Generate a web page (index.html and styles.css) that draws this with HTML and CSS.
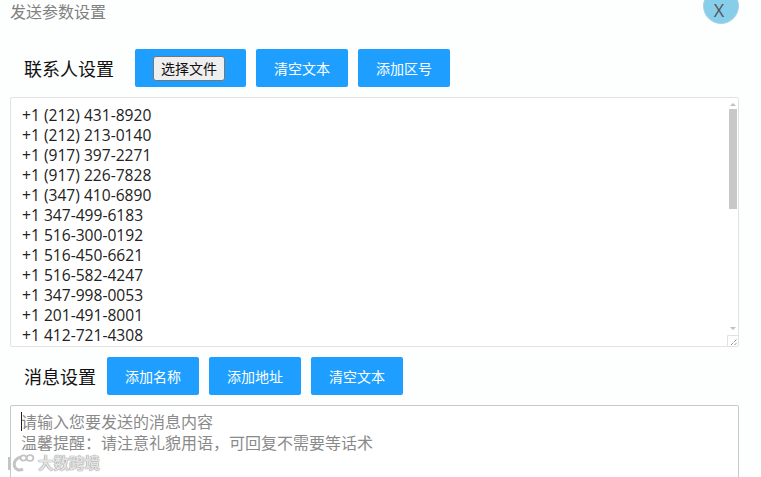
FILE: index.html
```html
<!DOCTYPE html>
<html lang="zh">
<head>
<meta charset="utf-8">
<title>发送参数设置</title>
<link rel="stylesheet" href="styles.css">
</head>
<body>
<div class="dialog">
  <header class="head">
    <h1 class="title">发送参数设置</h1>
    <button class="close" type="button">X</button>
  </header>
  <section class="row row-contacts">
    <span class="label label-contacts">联系人设置</span>
    <span class="btn btn-file"><span class="file-face">选择文件</span></span>
    <button class="btn" type="button">清空文本</button>
    <button class="btn" type="button">添加区号</button>
  </section>
  <div class="contacts-wrap">
    <textarea class="box box-contacts" spellcheck="false">+1 (212) 431-8920
+1 (212) 213-0140
+1 (917) 397-2271
+1 (917) 226-7828
+1 (347) 410-6890
+1 347-499-6183
+1 516-300-0192
+1 516-450-6621
+1 516-582-4247
+1 347-998-0053
+1 201-491-8001
+1 412-721-4308</textarea>
    <span class="arrow-up"></span>
    <span class="thumb"></span>
    <span class="arrow-down"></span>
    <svg class="grip" width="12" height="12" viewBox="0 0 12 12" fill="none">
      <path d="M.5 12V.5H12" stroke="#e2e2e2"/>
      <path d="M4 10 10 4M7.5 10 10 7.500" stroke="#555" stroke-dasharray="1 1"/>
    </svg>
  </div>
  <section class="row row-message">
    <span class="label label-message">消息设置</span>
    <button class="btn" type="button">添加名称</button>
    <button class="btn" type="button">添加地址</button>
    <button class="btn" type="button">清空文本</button>
  </section>
  <div class="message-wrap">
    <textarea class="box box-message" placeholder="请输入您要发送的消息内容&#10;温馨提醒：请注意礼貌用语，可回复不需要等话术"></textarea>
    <span class="caret"></span>
  </div>
</div>
<div class="watermark">
  <svg class="wm-icon" width="30" height="20" viewBox="0 0 30 20" fill="none">
    <path d="M2.500 5v13" stroke="#c4c4c4" stroke-width="3"/>
    <path d="M14 5c-5 1-7.500 5-6.500 9s5 5 8.500 3" stroke="#c4c4c4" stroke-width="3"/>
    <ellipse cx="16.500" cy="6" rx="3" ry="2.600" stroke="#c4c4c4" stroke-width="1.800"/>
    <ellipse cx="23" cy="6" rx="3.400" ry="2.800" stroke="#c4c4c4" stroke-width="1.800"/>
  </svg>
  <span class="wm-text">大数跨境</span>
</div>
</body>
</html>
```
FILE: styles.css
```css
* { box-sizing: border-box; }
html, body { margin: 0; height: 100%; overflow: hidden; }
body {
  width: 761px;
  height: 477px;
  position: relative;
  background: #fdfefe;
  font-family: "Open Sans", "Noto Sans CJK SC", sans-serif;
}
.dialog {
  height: 477px;
  overflow: hidden;
  padding: 0 22px 0 10px;
  display: flex;
  flex-direction: column;
}
.head { height: 49px; flex: none; display: flex; justify-content: space-between; align-items: flex-start; }
.title {
  margin: 1px 0 0;
  font-size: 16px;
  font-weight: 400;
  line-height: 20px;
  color: #808080;
  font-family: "Noto Sans CJK SC", sans-serif;
}
.close {
  width: 36px;
  height: 36px;
  margin-top: -12px;
  padding: 8px 4px 0 0;
  border: 1px solid #a9d3e6;
  border-radius: 50%;
  background: #87ceeb;
  color: #555;
  font: 400 18px/20px "Open Sans", sans-serif;
}
.row { display: flex; flex: none; align-items: center; gap: 10px; height: 38px; }
.row-contacts { padding-left: 14px; margin-bottom: 10px; }
.row-message { padding-left: 14px; margin-top: 10px; margin-bottom: 10px; }
.label {
  font-size: 18px;
  line-height: 24px;
  color: #111;
  font-family: "Noto Sans CJK SC", sans-serif;
}
.label-contacts { margin-right: 11px; }
.label-message { margin-right: 1px; }
.btn {
  width: 92px;
  height: 38px;
  padding: 0;
  border: 0;
  border-radius: 2px;
  background: #1e9fff;
  color: #fff;
  font: 400 14px/38px "Noto Sans CJK SC", sans-serif;
}
.btn-file { width: 111px; display: flex; align-items: center; padding-left: 18px; }
.file-face {
  width: 72px;
  height: 25px;
  border: 1px solid #767676;
  border-radius: 3px;
  background: #efefef;
  color: #111;
  font-size: 14px;
  line-height: 23px;
  text-align: center;
}
.box {
  display: block;
  width: 729px;
  margin: 0;
  padding: 7px 11px;
  border: 1px solid #e2e2e2;
  border-radius: 2px;
  outline: 0;
  background: #fff;
  color: #222;
  font: 400 15.6px/20px "Open Sans", "Noto Sans CJK SC", sans-serif;
  resize: none;
  overflow: hidden;
}
.box-contacts { height: 250px; }
.box-message { height: 100px; border-color: #c9c9c9; padding-top: 5px; padding-left: 10px; }
.box-message::placeholder {
  color: #8a8a8a;
  opacity: 1;
  font-family: "Noto Sans CJK SC", sans-serif;
  font-size: 16px;
  line-height: 21px;
}
.contacts-wrap, .message-wrap { position: relative; flex: none; }
.caret { position: absolute; left: 11px; top: 7px; width: 1px; height: 19px; background: #222; }
.thumb { position: absolute; left: 719px; top: 12px; width: 8px; height: 100px; background: #c8c8c8; }
.arrow-up, .arrow-down { position: absolute; left: 720px; width: 0; height: 0; border-left: 3px solid transparent; border-right: 3px solid transparent; }
.arrow-up { top: 6px; border-bottom: 3px solid #c0c0c0; }
.arrow-down { top: 230px; border-top: 3px solid #c0c0c0; }
.grip { position: absolute; left: 717px; top: 238px; }
.watermark {
  position: absolute;
  left: 7px;
  top: 452px;
  display: flex;
  align-items: center;
  gap: 1px;
  pointer-events: none;
}
.wm-text {
  font: 700 15.5px/20px "Noto Sans CJK SC", sans-serif;
  color: rgba(240, 240, 240, 0.9);
  text-shadow: 0 0 1px #888, 0 0 1px #888;
}
```
